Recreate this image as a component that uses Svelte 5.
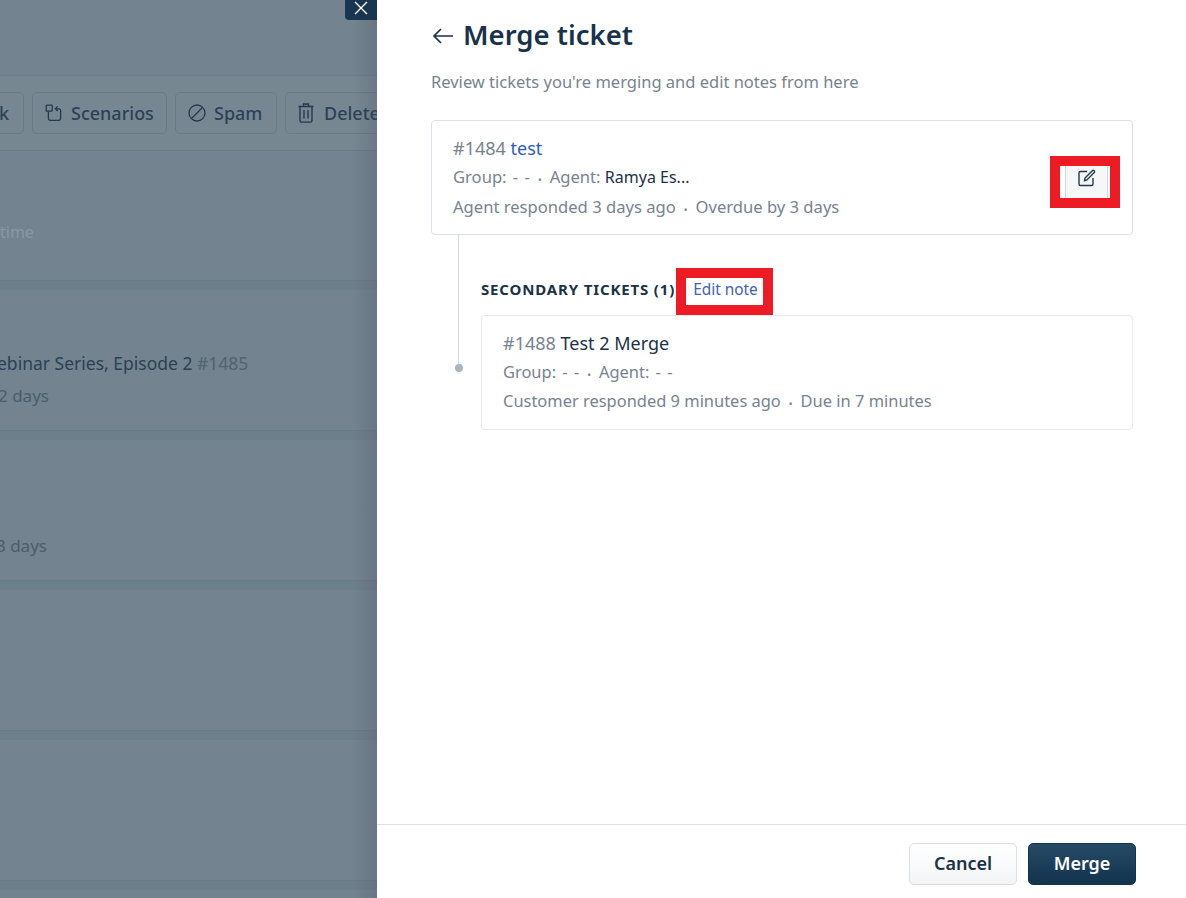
<script>
  const rows = [
    { cls: 'r1', text: 'time' },
    { cls: 'r2', title: 'ebinar Series, Episode 2', id: '#1485', sub: '2 days' },
    { cls: 'r3', sub: '3 days' },
    { cls: 'r4' },
    { cls: 'r5' }
  ];
</script>

<div class="page">
  <div class="backdrop">
    <button class="close" aria-label="Close">
      <svg width="16" height="16" viewBox="0 0 16 16"><path d="M2 1l12 12M14 1L2 13" stroke="#fff" stroke-width="1.4" fill="none"/></svg>
    </button>
    <div class="bar-top"></div>
    <div class="toolbar">
      <div class="tb-btn link"><span>k</span></div>
      <div class="tb-btn scen">
        <svg width="18" height="18" viewBox="0 0 18 18" fill="none" stroke="#24394d" stroke-width="1.3"><rect x="1.2" y="1.2" width="6" height="6" rx=".8"/><path d="M3.4 7.5v7.2a1.6 1.6 0 0 0 1.6 1.6h9a1.6 1.6 0 0 0 1.6-1.6V6.4a1.6 1.6 0 0 0-1.6-1.6h-3.4M12.6 2.400l-2.200 2.300 2.200 2.300"/></svg>
        <span>Scenarios</span>
      </div>
      <div class="tb-btn spam">
        <svg width="18" height="18" viewBox="0 0 18 18" fill="none" stroke="#24394d" stroke-width="1.3"><circle cx="9" cy="9" r="8"/><path d="M3.500 14.500l11-11"/></svg>
        <span>Spam</span>
      </div>
      <div class="tb-btn del">
        <svg width="16" height="20" viewBox="0 0 16 20" fill="none" stroke="#24394d" stroke-width="1.4"><path d="M.5 3.500h15M5.500 3.200V1h5v2.200M2 3.500v14a1.600 1.600 0 0 0 1.600 1.600h8.800A1.600 1.600 0 0 0 14 17.500v-14M6 7v8.500M10 7v8.500"/></svg>
        <span>Delete</span>
      </div>
    </div>
    {#each rows as r}
      <div class="row {r.cls}">
        {#if r.text}<div class="r-muted">{r.text}</div>{/if}
        {#if r.title}<div class="r-title">{r.title} <span class="r-id">{r.id}</span></div>{/if}
        {#if r.sub}<div class="r-sub">{r.sub}</div>{/if}
      </div>
    {/each}
  </div>

  <div class="panel">
    <div class="body">
      <div class="head">
        <svg class="back" width="24" height="20" viewBox="0 0 24 20" fill="none" stroke="#1b3145" stroke-width="1.7"><path d="M22 10H3M10 3l-7 7 7 7"/></svg>
        <h1>Merge ticket</h1>
      </div>
      <p class="lead">Review tickets you're merging and edit notes from here</p>

      <div class="card primary">
        <div class="line first"><span class="gray">#1484</span> <span class="blue">test</span></div>
        <div class="line"><span class="gray dash">Group: - -</span><span class="dot">•</span><span class="gray">Agent:</span> <span class="dark small">Ramya Es...</span></div>
        <div class="line"><span class="gray">Agent responded 3 days ago</span><span class="dot">•</span><span class="gray">Overdue by 3 days</span></div>
        <div class="mark icon-mark">
          <div class="icon-btn">
            <svg width="18" height="18" viewBox="0 0 18 18" fill="none" stroke="#24394d" stroke-width="1.4"><path d="M9 2.500H2.500A1.500 1.500 0 0 0 1 4v11a1.500 1.500 0 0 0 1.500 1.500h11A1.500 1.500 0 0 0 15 15V9"/><path d="M6.500 11.700l.5-2.700 7.300-7.300a1.300 1.300 0 0 1 1.900 0 1.300 1.300 0 0 1 0 1.900L8.900 11z"/></svg>
          </div>
        </div>
      </div>

      <div class="secondary">
        <div class="rail"><span class="knob"></span></div>
        <div class="sec-main">
          <div class="sec-head">
            <span class="sec-title">SECONDARY TICKETS (1)</span>
            <span class="mark note-mark"><span class="note">Edit note</span></span>
          </div>
          <div class="card sec-card">
            <div class="line first"><span class="gray">#1488</span> <span class="dark">Test 2 Merge</span></div>
            <div class="line"><span class="gray dash">Group: - -</span><span class="dot">•</span><span class="gray dash">Agent: - -</span></div>
            <div class="line"><span class="gray">Customer responded 9 minutes ago</span><span class="dot">•</span><span class="gray">Due in 7 minutes</span></div>
          </div>
        </div>
      </div>
    </div>
    <div class="foot">
      <button class="btn cancel">Cancel</button>
      <button class="btn merge">Merge</button>
    </div>
  </div>
</div>

<style>
  :global(body) { margin: 0; }
  .page {
    display: flex;
    width: 1186px;
    height: 898px;
    overflow: hidden;
    font-family: "Noto Sans", "Open Sans", sans-serif;
    color: #1b3145;
    background: #fff;
  }
  .backdrop {
    position: relative;
    width: 377px;
    flex: none;
    overflow: hidden;
    background: #73838f;
  }
  .backdrop::after {
    content: "";
    position: absolute;
    top: 0; right: 0; bottom: 0;
    width: 24px;
    background: linear-gradient(to right, rgba(60,70,80,0), rgba(60,70,80,.22));
  }
  .close {
    position: absolute;
    top: 0; right: 0;
    width: 32px;
    height: 20px;
    padding: 0;
    border: 0;
    border-radius: 0 0 0 4px;
    background: #193650;
    display: flex;
    justify-content: center;
    align-items: flex-end;
    z-index: 2;
  }
  .close svg { display: block; margin-bottom: 3px; }
  .bar-top { height: 75px; border-bottom: 1px solid #6d7e8a; }
  .toolbar {
    height: 75px;
    box-sizing: border-box;
    display: flex;
    align-items: center;
    gap: 8px;
    margin-left: -40px;
    width: 500px;
    background: #778792;
    border-bottom: 1px solid #6b7c89;
  }
  .tb-btn {
    height: 42px;
    box-sizing: border-box;
    border: 1px solid #687a88;
    border-radius: 5px;
    display: flex;
    align-items: center;
    gap: 8px;
    font-size: 18px;
    font-weight: 500;
    color: #2b4256;
    flex: none;
    padding: 0 12px;
  }
  .link { width: 64px; justify-content: flex-end; padding: 0 14px 0 0; }
  .scen { width: 135px; }
  .spam { width: 102px; }
  .del { width: 110px; gap: 10px; }
  .row {
    background: #73838f;
    border-bottom: 1px solid #6a7b88;
    box-sizing: border-box;
    margin-bottom: 9px;
    position: relative;
    box-shadow: 0 9px 0 #6e7f8c;
  }
  .r1 { height: 130px; }
  .r2, .r3, .r4, .r5 { height: 141px; }
  .r-muted { padding-top: 70px; font-size: 16px; color: #8a98a2; }
  .r-title { padding-top: 60px; margin-left: -3px; font-size: 17.5px; color: #2a4254; white-space: nowrap; line-height: 26px; }
  .r-id { color: #506473; }
  .r-sub { font-size: 17px; color: #4a5d6c; line-height: 24px; margin-top: 8px; margin-left: -2px; }
  .r3 .r-sub { padding-top: 94px; margin-top: 0; margin-left: -4px; }

  .panel {
    flex: 1;
    display: flex;
    flex-direction: column;
    min-width: 0;
  }
  .body {
    flex: 1;
    padding: 0 53px 0 54px;
  }
  .head {
    display: flex;
    align-items: center;
    height: 70px;
    gap: 8px;
  }
  .back { flex: none; margin-top: 1px; }
  h1 {
    margin: 0;
    font-size: 27.5px;
    font-weight: 600;
    line-height: 38px;
    color: #17324a;
  }
  .lead {
    margin: 0;
    font-size: 16.5px;
    line-height: 24px;
    color: #77838f;
  }
  .card {
    border: 1px solid #dde1e5;
    border-radius: 4px;
    box-sizing: border-box;
    background: #fff;
    padding: 13px 21px;
  }
  .primary {
    position: relative;
    margin-top: 26px;
    height: 115px;
  }
  .line {
    font-size: 16.6px;
    line-height: 29px;
    white-space: nowrap;
    display: block;
  }
  .first { font-size: 18px; margin-bottom: -1px; }
  .gray { color: #77838f; }
  .blue { color: #2c5cc5; }
  .dark { color: #1b3145; }
  .small { font-size: 16px; }
  .dash { word-spacing: 2px; }
  .dot { color: #77838f; font-size: 10px; line-height: 0; margin: 0 8px; vertical-align: -1px; }
  .mark { border: 10px solid #ed1c24; background: #fff; box-sizing: border-box; }
  .icon-mark {
    position: absolute;
    top: 35px;
    left: 618px;
    width: 70px;
    height: 52px;
  }
  .icon-btn {
    height: 100%;
    margin: 0 2px 0 5px;
    border-left: 1px solid #cfd7df;
    border-right: 1px solid #cfd7df;
    background: #f5f7f9;
    display: flex;
    justify-content: center;
    align-items: flex-start;
    padding-top: 3px;
    box-sizing: border-box;
  }
  .secondary { display: flex; }
  .rail {
    width: 50px;
    flex: none;
    height: 133px;
    position: relative;
    box-sizing: border-box;
  }
  .rail::before {
    content: "";
    position: absolute;
    left: 27px;
    top: 0;
    height: 129px;
    width: 1px;
    background: #cfd7df;
  }
  .knob {
    position: absolute;
    left: 24px;
    top: 129px;
    width: 8px;
    height: 8px;
    border-radius: 50%;
    background: #aab4bd;
  }
  .sec-main { flex: 1; min-width: 0; }
  .sec-head {
    display: flex;
    align-items: center;
    height: 47px;
    margin-top: 33px;
  }
  .sec-title {
    font-size: 15px;
    font-weight: 700;
    letter-spacing: .85px;
    color: #1b3145;
    white-space: nowrap;
    margin-bottom: 5px;
  }
  .note-mark {
    display: block;
    width: 97px;
    height: 47px;
    margin-left: 1px;
    flex: none;
    padding-left: 7px;
    line-height: 23px;
  }
  .note { font-size: 15.4px; color: #3b62b5; white-space: nowrap; }
  .sec-card { height: 115px; padding: 13px 21px; margin-top: 0; border-color: #e6e9ec; }
  .sec-card .line:not(.first) { font-size: 16.45px; }
  .foot {
    height: 74px;
    box-sizing: border-box;
    border-top: 1px solid #dde1e5;
    display: flex;
    justify-content: flex-end;
    align-items: flex-start;
    gap: 11px;
    padding: 18px 50px 0 0;
  }
  .btn {
    width: 108px;
    height: 42px;
    border-radius: 5px;
    font-family: inherit;
    font-size: 18px;
    font-weight: 600;
    padding: 0 0 2px;
  }
  .cancel {
    background: linear-gradient(#fff, #f3f5f7);
    border: 1px solid #dadfe3;
    color: #1b3145;
  }
  .merge {
    background: linear-gradient(#264966, #12344d);
    border: 1px solid #12344d;
    color: #fff;
  }
</style>
